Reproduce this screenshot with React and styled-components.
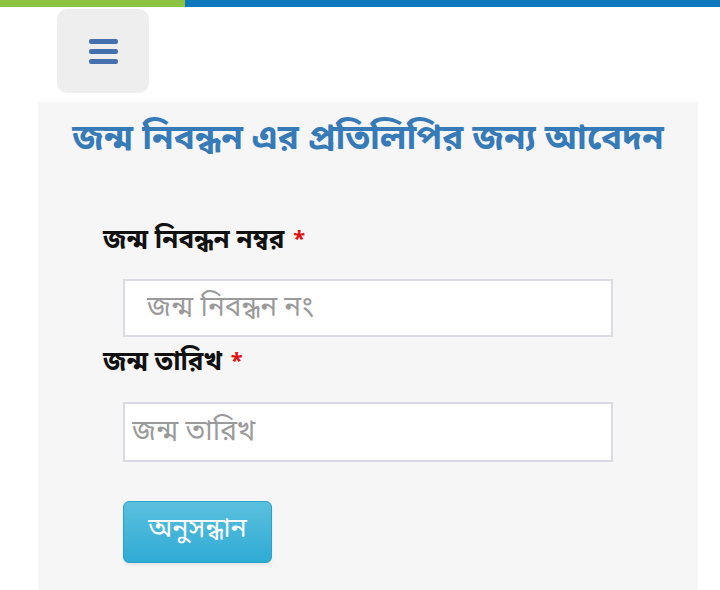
import React from "react";
import styled, { createGlobalStyle } from "styled-components";

const GlobalStyle = createGlobalStyle`
  html, body {
    margin: 0;
    padding: 0;
    background: #ffffff;
    font-family: "Noto Sans Bengali", "Noto Sans", "Liberation Sans", sans-serif;
  }
`;

const Page = styled.div`
  width: 720px;
  height: 590px;
  overflow: hidden;
  display: flex;
  flex-direction: column;
`;

const TopBar = styled.div`
  height: 7px;
  display: grid;
  grid-template-columns: 185px 1fr;
`;

const BarPart = styled.div`
  background: ${(p) => p.color};
`;

const Header = styled.header`
  height: 95px;
  padding: 2px 0 0 57px;
  box-sizing: border-box;
`;

const MenuButton = styled.button`
  width: 92px;
  height: 84px;
  border: none;
  border-radius: 10px;
  background: #eeeeee;
  display: flex;
  flex-direction: column;
  align-items: center;
  justify-content: center;
  gap: 5px;
  padding: 0;
  cursor: pointer;
`;

const MenuLine = styled.span`
  width: 29px;
  height: 5px;
  border-radius: 2px;
  background: #4471ae;
`;

const Panel = styled.section`
  margin: 0 22px 0 38px;
  flex: 1;
  background: #f6f6f6;
  padding: 18px 0 0 0;
`;

const Title = styled.h1`
  margin: 0;
  text-align: center;
  color: #367ab8;
  font-size: 35px;
  font-weight: bold;
  line-height: 40px;
  white-space: nowrap;
`;

const Form = styled.form`
  padding: 67px 0 0 65px;
  display: flex;
  flex-direction: column;
`;

const Label = styled.label`
  display: block;
  height: 30px;
  font-size: 26px;
  font-weight: bold;
  color: #111111;
  line-height: 30px;
`;

const Star = styled.span`
  margin-left: 2px;
  color: #e01010;
  font-size: 22px;
  line-height: 0;
  vertical-align: 2px;
`;

const Input = styled.input`
  margin: ${(p) => p.$top}px 0 0 20px;
  width: 490px;
  height: ${(p) => p.$h}px;
  box-sizing: border-box;
  border: 2px solid #dadae3;
  background: #ffffff;
  padding: 0 0 0 ${(p) => p.$pad}px;
  font-family: inherit;
  font-size: 28px;
  color: #333;
  outline: none;
  &::placeholder {
    color: #9a9a9a;
  }
`;

const Row = styled.div`
  margin-top: ${(p) => p.$top}px;
`;

const SearchButton = styled.button`
  margin: 39px 0 0 20px;
  align-self: flex-start;
  width: 149px;
  height: 62px;
  border: 1px solid #2aa3c8;
  border-radius: 6px;
  background: linear-gradient(#5bc0de, #2fabd4);
  box-shadow: 0 2px 3px rgba(0, 0, 0, 0.08);
  color: #ffffff;
  font-family: inherit;
  font-size: 27px;
  padding: 0 0 4px 0;
`;

export default function App() {
  return (
    <Page>
      <GlobalStyle />
      <TopBar>
        <BarPart color="#8cc341" />
        <BarPart color="#0f78bd" />
      </TopBar>
      <Header>
        <MenuButton type="button" aria-label="menu">
          <MenuLine />
          <MenuLine />
          <MenuLine />
        </MenuButton>
      </Header>
      <Panel>
        <Title>জন্ম নিবন্ধন এর প্রতিলিপির জন্য আবেদন</Title>
        <Form onSubmit={(e) => e.preventDefault()}>
          <Label htmlFor="regNo">
            জন্ম নিবন্ধন নম্বর <Star>*</Star>
          </Label>
          <Input id="regNo" $top={22} $h={58} $pad={22} placeholder="জন্ম নিবন্ধন নং" />
          <Row $top={12}>
            <Label htmlFor="dob">
              জন্ম তারিখ <Star>*</Star>
            </Label>
          </Row>
          <Input id="dob" $top={23} $h={60} $pad={7} placeholder="জন্ম তারিখ" />
          <SearchButton type="submit">অনুসন্ধান</SearchButton>
        </Form>
      </Panel>
    </Page>
  );
}
